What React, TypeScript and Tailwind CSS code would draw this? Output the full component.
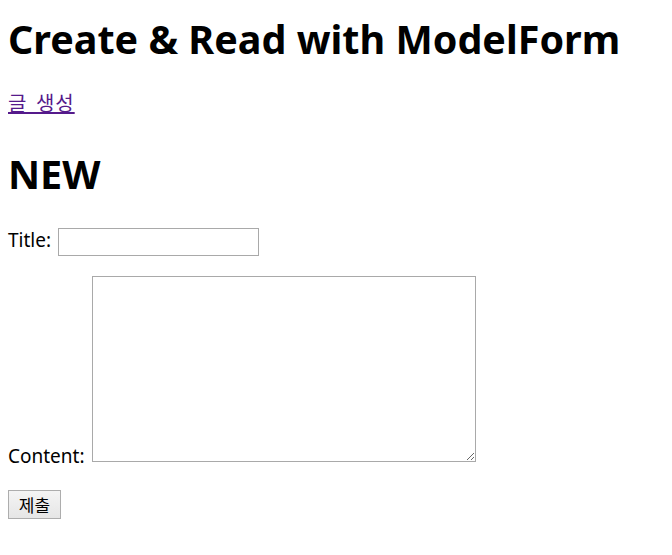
import React from 'react';

export default function App() {
    return (
        <div className="bg-white text-black px-2 pt-[15px] font-['Noto_Sans','Noto_Sans_CJK_KR',sans-serif] text-[19px]">
            {/* Header */}
            <h1 className="text-[39.5px] leading-[48px] font-bold">Create &amp; Read with ModelForm</h1>
            <p className="mt-[28px] leading-[24px]">
                <a href="#" className="text-[#551a8b] underline text-[20px] tracking-[1px] [word-spacing:3px] font-['Noto_Sans_CJK_KR',sans-serif]">글 생성</a>
            </p>

            <h1 className="mt-[34px] text-[39.5px] leading-[48px] font-bold">NEW</h1>

            {/* Form */}
            <form className="mt-[30px]" onSubmit={(e) => e.preventDefault()}>
                <div className="flex items-start gap-[7px]">
                    <label htmlFor="title" className="leading-[24px]">Title:</label>
                    <input
                        id="title"
                        type="text"
                        className="w-[201px] h-[28px] border border-[#a9a9a9] bg-white px-1 text-[16px] outline-none"
                    />
                </div>
                <div className="mt-[20px] flex items-end gap-[7px]">
                    <label htmlFor="content" className="leading-[24px] -mb-[6px]">Content:</label>
                    <textarea
                        id="content"
                        className="w-[384px] h-[186px] border border-[#a9a9a9] bg-white p-1 text-[16px] outline-none"
                    />
                </div>
                <button
                    type="submit"
                    className="mt-[28px] w-[53px] h-[29px] border border-[#adadad] bg-gradient-to-b from-[#f4f4f4] to-[#e6e6e6] text-[17px] leading-[20px] font-['Noto_Sans_CJK_KR',sans-serif]"
                >
                    제출
                </button>
            </form>
        </div>
    );
}
